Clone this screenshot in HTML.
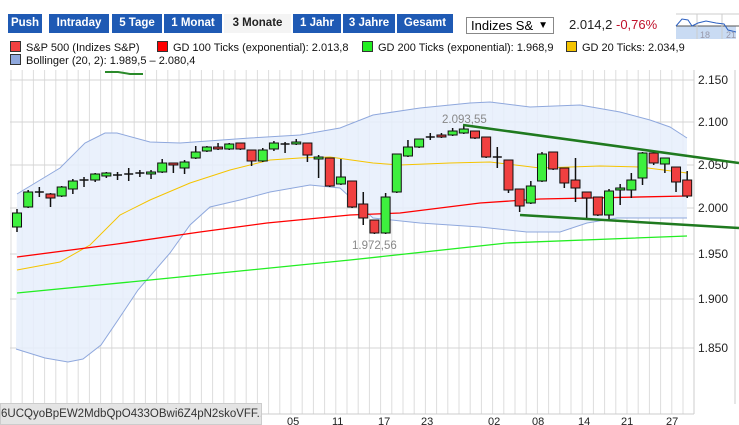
<!DOCTYPE html>
<html><head><meta charset="utf-8"><style>
body{margin:0;width:739px;height:425px;overflow:hidden;background:#fff;font-family:"Liberation Sans","DejaVu Sans",sans-serif;position:relative}
.tab{position:absolute;top:14px;height:19px;background:#1f5ab4;color:#fff;font-weight:bold;font-size:11.5px;line-height:19px;text-align:center}
.tab.act{background:#f4f4f4;color:#222}
.lg{position:absolute;font-size:11px;color:#111;white-space:nowrap}
.sq{display:inline-block;width:9px;height:9px;border:1px solid #333;margin-right:5px;vertical-align:-1px}
</style></head><body>
<div class="tab" style="left:8px;width:34px">Push</div>
<div class="tab" style="left:49px;width:60px">Intraday</div>
<div class="tab" style="left:112px;width:50px">5 Tage</div>
<div class="tab" style="left:164px;width:58px">1 Monat</div>
<div class="tab act" style="left:224px;width:67px">3 Monate</div>
<div class="tab" style="left:293px;width:48px">1 Jahr</div>
<div class="tab" style="left:343px;width:52px">3 Jahre</div>
<div class="tab" style="left:397px;width:56px">Gesamt</div>
<div style="position:absolute;left:466px;top:17px;height:17px;border:1px solid #888;font-size:13px;line-height:16px;padding-left:4px;box-sizing:border-box;width:88px">Indizes S&amp; <span style="position:absolute;right:5px;font-size:10px">▼</span></div>
<div style="position:absolute;left:569px;top:17px;font-size:13px;color:#222">2.014,2 <span style="color:#c0102a">-0,76%</span></div>
<svg style="position:absolute;left:672px;top:10px" width="67" height="30">
<rect x="4" y="16" width="60" height="13" fill="#c9dbf3"/>
<line x1="4" y1="16" x2="67" y2="16" stroke="#555"/>
<line x1="25" y1="4" x2="25" y2="29" stroke="#ccc"/><line x1="50" y1="4" x2="50" y2="29" stroke="#ccc"/>
<line x1="4" y1="4" x2="67" y2="4" stroke="#ccc"/>
<polyline points="4,16 10,9 16,10 20,16 26,13 34,11 44,13 52,14 56,20 64,22" fill="none" stroke="#2b5fc0" stroke-width="1"/>
<text x="28" y="28" font-size="9" fill="#99a">18</text><text x="54" y="28" font-size="9" fill="#99a">21</text>
</svg>
<div class="lg" style="left:10px;top:41px"><span class="sq" style="background:#f04040"></span>S&amp;P 500 (Indizes S&amp;P)</div>
<div class="lg" style="left:157px;top:41px"><span class="sq" style="background:#f00"></span>GD 100 Ticks (exponential): 2.013,8</div>
<div class="lg" style="left:362px;top:41px"><span class="sq" style="background:#2e2"></span>GD 200 Ticks (exponential): 1.968,9</div>
<div class="lg" style="left:566px;top:41px"><span class="sq" style="background:#f5c400"></span>GD 20 Ticks: 2.034,9</div>
<div class="lg" style="left:10px;top:54px"><span class="sq" style="background:#8fa8dd"></span>Bollinger (20, 2): 1.989,5 – 2.080,4</div>
<svg id="ch" style="position:absolute;left:0;top:0" width="739" height="425"></svg>
<div style="position:absolute;left:0;top:403px;width:262px;height:22px;background:#e4e4e4;border:1px solid #ccc;box-sizing:border-box;font-size:11.5px;color:#333;line-height:20px;white-space:nowrap;overflow:hidden">6UCQyoBpEW2MdbQpO433OBwi6Z4pN2skoVFF...</div>
<script>
var s='';
s+='<rect x="10" y="70" width="684" height="344" fill="#fff"/>';
for(var x=11;x<=694;x+=11.2){s+='<line x1="'+x.toFixed(1)+'" y1="70" x2="'+x.toFixed(1)+'" y2="414" stroke="#ddd"/>';}
var hl=[[80,'2.150'],[122,'2.100'],[165,'2.050'],[208,'2.000'],[254,'1.950'],[299,'1.900'],[348,'1.850']];
hl.forEach(function(h){s+='<line x1="10" y1="'+h[0]+'" x2="694" y2="'+h[0]+'" stroke="#d4d4d4"/><text x="698" y="'+(h[0]+4)+'" font-size="12" fill="#222">'+h[1]+'</text>';});
s+='<line x1="694" y1="70" x2="694" y2="414" stroke="#ccc"/><line x1="10" y1="414" x2="694" y2="414" stroke="#ccc"/><line x1="735" y1="70" x2="735" y2="404" stroke="#ccc"/>';
var up=[[17,194],[60,168],[85,143],[105,133],[117,133],[150,142],[180,143],[250,138],[300,135],[340,128],[373,115],[420,108],[470,103],[490,102],[530,107],[580,105],[620,112],[650,120],[670,127],[687,138]];
var lo=[[687,218],[617,218],[587,223],[560,232],[527,232],[480,227],[420,223],[373,218],[340,188],[310,185],[270,192],[240,200],[210,207],[190,225],[170,253],[138,290],[118,320],[101,345],[83,359],[68,362],[45,358],[16,349]];
function P(a){return a.map(function(p){return p[0]+','+p[1]}).join(' ');}
s+='<polygon points="'+P(up)+' '+P(lo)+'" fill="#e6effb" opacity="0.85"/>';
s+='<polyline points="'+P(up)+'" fill="none" stroke="#8fa8dd"/><polyline points="'+P(lo)+'" fill="none" stroke="#8fa8dd"/>';
s+='<polyline points="17,270 60,262 90,245 120,215 150,200 190,183 230,170 270,160 300,158 330,157 373,163 400,165 450,163 490,162 540,168 600,166 640,167 687,173" fill="none" stroke="#f5c400"/>';
s+='<polyline points="17,257 117,244 200,232 267,223 350,215 400,213 480,203 540,199 687,196" fill="none" stroke="#f00" stroke-width="1.3"/>';
s+='<polyline points="17,293 130,282 250,270 350,260 507,243 687,236" fill="none" stroke="#22ee22" stroke-width="1.3"/>';
var c=[['g',213,227,209,232],['g',192,207,190,208],['d',192,192,187,197],['r',194,198,193,207],['g',187,196,186,197],['g',181,189,179,194],['d',180,180,177,187],['g',174,180,173,182],['g',173,176,172,178],['d',175,175,172,180],['d',174,174,168,181],['d',173,173,170,177],['g',172,174,170,179],['g',163,172,159,173],['r',163,165,163,173],['g',162,168,160,174],['g',152,158,146,159],['g',147,151,146,152],['r',147,149,143,150],['g',144,149,143,150],['r',143,149,143,150],['r',150,161,150,166],['g',150,161,148,162],['g',143,149,141,151],['d',144,144,142,153],['g',142,144,139,145],['r',143,155,143,162],['g',157,159,155,178],['r',158,186,158,187],['g',177,184,159,185],['r',181,207,181,208],['r',204,218,192,225],['r',220,233,220,234],['g',197,233,193,234],['g',154,192,154,193],['g',147,156,140,157],['g',139,147,139,148],['d',137,137,133,140],['r',135,137,133,138],['g',131,135,128,136],['g',129,133,125,134],['r',131,138,131,139],['r',137,157,137,158],['d',157,157,147,168],['r',160,190,160,193],['r',189,206,189,212],['g',186,203,181,204],['g',154,181,152,182],['r',152,169,152,170],['r',168,183,168,188],['r',180,188,158,202],['r',192,198,192,218],['r',197,215,197,216],['g',191,215,189,219],['g',188,190,184,205],['g',180,190,173,198],['g',153,178,152,185],['r',153,163,152,165],['g',158,164,158,173],['r',167,182,167,192],['r',180,196,171,198]];
c.forEach(function(k,i){var x=17+11.17*i;s+='<line x1="'+x+'" y1="'+k[3]+'" x2="'+x+'" y2="'+k[4]+'" stroke="#111" stroke-width="1.5"/>';
if(k[0]=='d'){s+='<line x1="'+(x-4.5)+'" y1="'+k[1]+'" x2="'+(x+4.5)+'" y2="'+k[1]+'" stroke="#111" stroke-width="1.5"/>';}
else{var h=Math.max(k[2]-k[1],2);s+='<rect x="'+(x-4.5)+'" y="'+k[1]+'" width="9" height="'+h+'" fill="'+(k[0]=='g'?'#3ef03e':'#f04040')+'" stroke="#111" stroke-width="1"/>';}});
s+='<line x1="463" y1="125" x2="739" y2="163" stroke="#1f7a1f" stroke-width="2.5"/><line x1="520" y1="215" x2="739" y2="228" stroke="#1f7a1f" stroke-width="2.5"/>';
s+='<path d="M105,72 L118,72 L130,74 L143,74" fill="none" stroke="#2a8a2a" stroke-width="2"/>';
s+='<text x="442" y="123" font-size="11.5" fill="#888">2.093,55</text><text x="352" y="249" font-size="11.5" fill="#888">1.972,56</text>';
[[293,'05'],[338,'11'],[384,'17'],[427,'23'],[494,'02'],[538,'08'],[584,'14'],[627,'21'],[672,'27']].forEach(function(t){s+='<text x="'+(t[0]-6)+'" y="425" font-size="11" fill="#222">'+t[1]+'</text>';});
document.getElementById('ch').innerHTML=s;
</script>
</body></html>
